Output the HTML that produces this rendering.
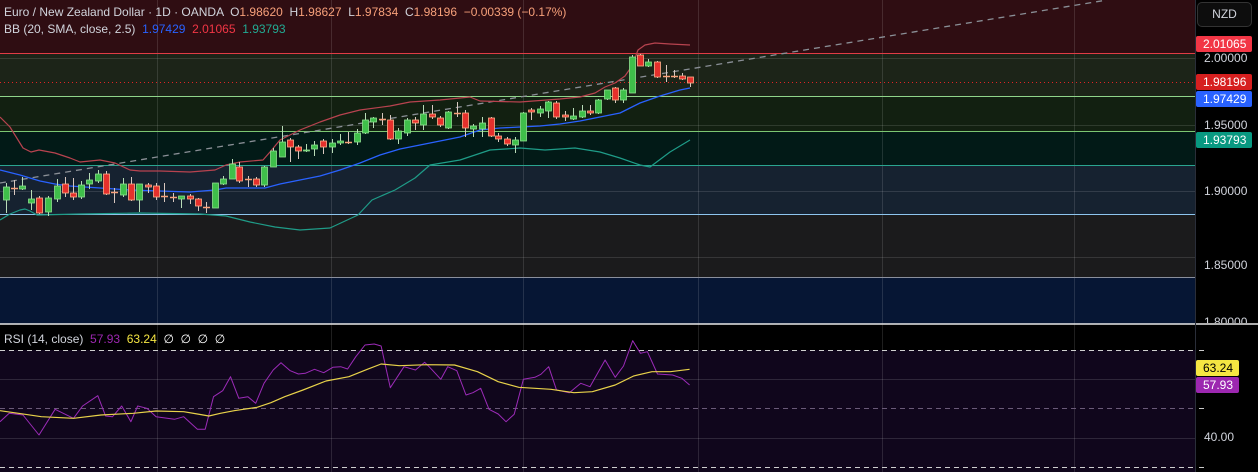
<!DOCTYPE html>
<html><head><meta charset="utf-8"><style>
html,body{margin:0;padding:0;background:#000;width:1258px;height:472px;overflow:hidden}
body{font-family:"Liberation Sans",sans-serif}
svg{position:absolute;left:0;top:0}
.lg{position:absolute;left:4px;font-size:12px;color:#d1d4dc;white-space:nowrap;letter-spacing:0}
.ax{position:absolute;left:1204px;font-size:12px;color:#d1d4dc}
.bd{position:absolute;left:1196px;width:56px;height:16px;border-radius:2px;font-size:12px;color:#fff;line-height:16px;padding-left:7px;box-sizing:border-box}
</style></head><body>
<svg id="s" width="1258" height="472" xmlns="http://www.w3.org/2000/svg"></svg>
<div class="lg" style="top:5px">Euro / New Zealand Dollar · 1D · OANDA &nbsp;O<span style="color:#f7a07a">1.98620</span> &nbsp;H<span style="color:#f7a07a">1.98627</span> &nbsp;L<span style="color:#f7a07a">1.97834</span> &nbsp;C<span style="color:#f7a07a">1.98196</span> &nbsp;<span style="color:#f7a07a">−0.00339 (−0.17%)</span></div>
<div class="lg" style="top:22px">BB (20, SMA, close, 2.5) &nbsp;<span style="color:#2962ff">1.97429</span> &nbsp;<span style="color:#f23645">2.01065</span> &nbsp;<span style="color:#22ab94">1.93793</span></div>
<div class="lg" style="top:332px">RSI (14, close) &nbsp;<span style="color:#9c27b0">57.93</span> &nbsp;<span style="color:#f5e642">63.24</span> &nbsp;<span style="color:#fff">∅ &nbsp;∅ &nbsp;∅ &nbsp;∅</span></div>
<div style="position:absolute;left:1197px;top:2px;width:55px;height:25px;border:1px solid #333;border-radius:5px;background:#0d0d0d;box-sizing:border-box;color:#d1d4dc;font-size:12px;line-height:23px;text-align:center">NZD</div>
<div class="ax" style="top:51px">2.00000</div>
<div class="ax" style="top:118px">1.95000</div>
<div class="ax" style="top:184px">1.90000</div>
<div class="ax" style="top:258px">1.85000</div>
<div class="ax" style="top:315px;height:8px;overflow:hidden">1.80000</div>
<div class="ax" style="top:430px">40.00</div>
<div class="bd" style="top:36px;background:#f23645">2.01065</div>
<div class="bd" style="top:74px;background:#d61f1f">1.98196</div>
<div class="bd" style="top:91px;background:#2962ff">1.97429</div>
<div class="bd" style="top:132px;background:#089981">1.93793</div>
<div class="bd" style="top:360px;background:#f5e642;color:#000;width:43px">63.24</div>
<div class="bd" style="top:377px;background:#9c27b0;width:43px">57.93</div>
<script>
const s=document.getElementById('s');let h='';
const R=(x,y,w,hh,c)=>h+=`<rect x="${x}" y="${y}" width="${w}" height="${hh}" fill="${c}"/>`;
const L=(x1,y1,x2,y2,c,w,d)=>h+=`<line x1="${x1}" y1="${y1}" x2="${x2}" y2="${y2}" stroke="${c}" stroke-width="${w||1}" ${d?`stroke-dasharray="${d}"`:''}/>`;
const P=(pts,c,w)=>h+=`<polyline points="${pts.map(p=>p.join(',')).join(' ')}" fill="none" stroke="${c}" stroke-width="${w||1}" stroke-linejoin="round"/>`;
// bands
R(0,0,1195,53,'#2f0d12');R(0,53,1195,43,'#1c2418');R(0,96,1195,35,'#122011');R(0,131,1195,34,'#021a17');
R(0,165,1195,49,'#162230');R(0,214,1195,63,'#1b1b1c');R(0,277,1195,47,'#061634');
R(0,325,1195,25,'#000');R(0,350,1195,122,'#10061c');
// grid
[58,125,191,257].forEach(y=>L(0,y+.5,1195,y+.5,'rgba(255,255,255,0.12)'));
[379,438].forEach(y=>L(0,y+.5,1195,y+.5,'rgba(255,255,255,0.13)'));
[157,331,523,698,882,1074].forEach(x=>L(x+.5,0,x+.5,472,'rgba(255,255,255,0.12)'));
// colored lines
L(0,53.5,1195,53.5,'#e03c45');L(0,96.5,1195,96.5,'#8fd48a');L(0,131.5,1195,131.5,'#7cc672');
L(0,165.5,1195,165.5,'#2aa590');L(0,214.5,1195,214.5,'#8ec5ee');L(0,277.5,1195,277.5,'#8a8f9c');
L(0,82.5,1195,82.5,'#e02424',1,'1 3');
L(0,324,1258,324,'#e8e8e8',1.5);
L(1195.5,0,1195.5,472,'#2a2e39');
// rsi dashed
L(0,350.5,1195,350.5,'#cfcfcf',1,'5 4');L(0,408.5,1195,408.5,'#6a5a78',1,'5 4');L(0,467.5,1195,467.5,'#cfcfcf',1,'5 4');
[350,408,467].forEach(y=>L(1199,y+.5,1204,y+.5,'#ccc'));
// trend dashed
L(0,183,1107,0,'#8a8f96',1.3,'6 5');
// BB
P([[0,117],[10,127],[23,148],[31,152],[39,150],[55,153],[70,158],[80,162],[90,161],[100,160],[115,163],[130,170],[140,171],[160,171],[190,172],[215,170],[226,165],[240,162],[263,160],[270,152],[280,140],[300,130],[320,122],[340,115],[360,110],[390,106],[410,102],[440,100],[470,97],[480,101],[520,102],[560,99],[580,97],[595,93],[605,87],[615,83],[625,76],[632,66],[638,50],[645,45],[655,43],[670,44],[690,45]],'#b8434f',1.2);
P([[0,170],[20,175],[40,181],[55,184],[70,186],[100,188],[130,190],[160,191],[190,192],[215,190],[226,188],[265,188],[280,184],[300,180],[320,176],[340,170],[360,163],[380,155],[400,149],[420,145],[440,141],[460,137],[480,130],[500,128],[540,126],[560,124],[580,121],[600,117],[620,113],[630,108],[640,103],[660,96],[680,90],[690,88]],'#2962ff',1.3);
P([[0,220],[10,214],[20,210],[25,209],[30,211],[37,215],[80,214],[140,213],[200,214],[226,216],[250,222],[275,227],[300,230],[330,228],[358,215],[372,200],[395,190],[415,178],[430,165],[460,160],[490,150],[520,148],[545,150],[575,148],[600,152],[620,158],[640,165],[650,167],[670,152],[690,140]],'#1f9c88',1.2);
// candles [x,open,close,high,low]
const C=[[6,200,187,183,213],[14,188,188,180,195],[22,189,186,177,190],[31,203,199,190,210],[39,198,213,196,214],[48,212,198,196,216],[57,199,186,179,202],[65,184,193,177,197],[73,193,197,178,200],[81,197,185,181,199],[89,184,180,173,189],[98,181,174,170,183],[106,174,194,171,195],[114,192,192,188,203],[123,195,184,178,197],[131,184,200,177,201],[139,200,184,184,212],[148,185,187,183,193],[156,186,197,183,200],[164,196,196,183,202],[173,197,197,193,202],[181,199,196,196,208],[190,196,199,194,204],[198,199,206,198,211],[206,207,207,202,213],[215,208,183,183,208],[223,184,179,176,185],[232,179,164,159,179],[239,167,181,162,183],[248,179,179,176,187],[256,179,185,177,187],[264,185,167,166,187],[273,167,151,148,167],[282,157,142,126,157],[290,140,147,138,162],[298,147,151,145,159],[306,151,150,144,152],[314,149,145,141,156],[323,141,147,139,154],[332,147,143,139,153],[340,143,141,134,145],[348,142,142,132,144],[357,142,133,129,145],[365,133,120,113,134],[373,122,118,117,128],[382,119,119,113,125],[390,120,139,115,140],[398,139,131,128,144],[407,133,120,118,136],[415,120,123,117,130],[423,125,114,105,130],[432,114,117,105,119],[440,118,125,116,127],[448,128,112,111,129],[457,113,113,102,117],[465,113,128,110,137],[473,129,126,124,137],[482,129,123,117,137],[491,118,136,117,137],[498,136,139,133,142],[507,139,144,137,146],[515,145,140,137,153],[523,141,113,112,141],[531,110,112,108,120],[540,113,109,106,117],[548,111,102,101,118],[556,103,117,101,119],[565,115,117,111,121],[573,119,116,108,120],[582,117,111,105,118],[590,111,113,105,115],[598,113,100,99,114],[607,99,90,90,100],[615,88,100,87,103],[623,100,90,88,103],[632,93,57,55,93],[640,55,66,54,66],[648,66,62,59,67],[657,62,77,61,78],[666,76,76,65,82],[674,76,76,70,78],[682,76,79,73,80],[690,77,83,77,87]];
C.forEach(([x,o,c,hi,lo])=>{const up=c<o,doji=Math.abs(o-c)<1;
 const t=Math.min(o,c),b=Math.max(o,c);
 L(x+.5,hi,x+.5,lo,up?'#b8dcb8':'#d8c8c0');
 if(doji){L(x-3,t+.5,x+4,t+.5,'#f7a07a',1.5);}
 else{h+=`<rect x="${x-2.5}" y="${t}" width="6" height="${b-t}" fill="${up?'#3fbf4a':'#e5302c'}" stroke="${up?'#8fe08f':'#ffb08a'}" stroke-width="0.8"/>`;}
});
// RSI
const sx=2.178,tr=a=>a.map(([x,y])=>[(x/sx).toFixed(1),(320+y/3).toFixed(1)]);
P(tr([[0,305],[20,280],[50,285],[85,345],[120,268],[160,295],[180,258],[213,227],[230,288],[245,290],[265,258],[285,305],[300,258],[320,265],[340,290],[380,298],[400,290],[430,328],[447,328],[465,230],[485,212],[502,170],[520,235],[540,230],[557,250],[575,190],[595,150],[612,128],[632,152],[650,162],[665,160],[685,148],[705,158],[725,142],[742,140],[757,147],[775,110],[795,75],[815,72],[830,78],[850,203],[880,140],[905,150],[925,127],[940,148],[960,178],[975,140],[995,152],[1015,225],[1030,218],[1047,205],[1065,268],[1085,282],[1102,305],[1120,283],[1140,178],[1165,172],[1178,163],[1195,140],[1212,210],[1240,218],[1265,190],[1285,200],[1318,120],[1340,172],[1358,138],[1378,62],[1395,100],[1410,95],[1432,162],[1465,165],[1485,175],[1502,195]]),'#9c2bb8',1);
P(tr([[0,272],[40,280],[90,290],[160,295],[220,285],[290,280],[340,273],[400,275],[430,282],[455,288],[480,280],[510,272],[560,262],[590,248],[620,230],[660,210],[710,183],[760,170],[800,148],[830,132],[870,137],[930,134],[990,135],[1040,155],[1085,185],[1130,202],[1200,208],[1250,218],[1290,215],[1340,195],[1380,168],[1420,155],[1460,155],[1502,148]]),'#e8d24a',1.2);
s.innerHTML=h;
</script>
</body></html>
